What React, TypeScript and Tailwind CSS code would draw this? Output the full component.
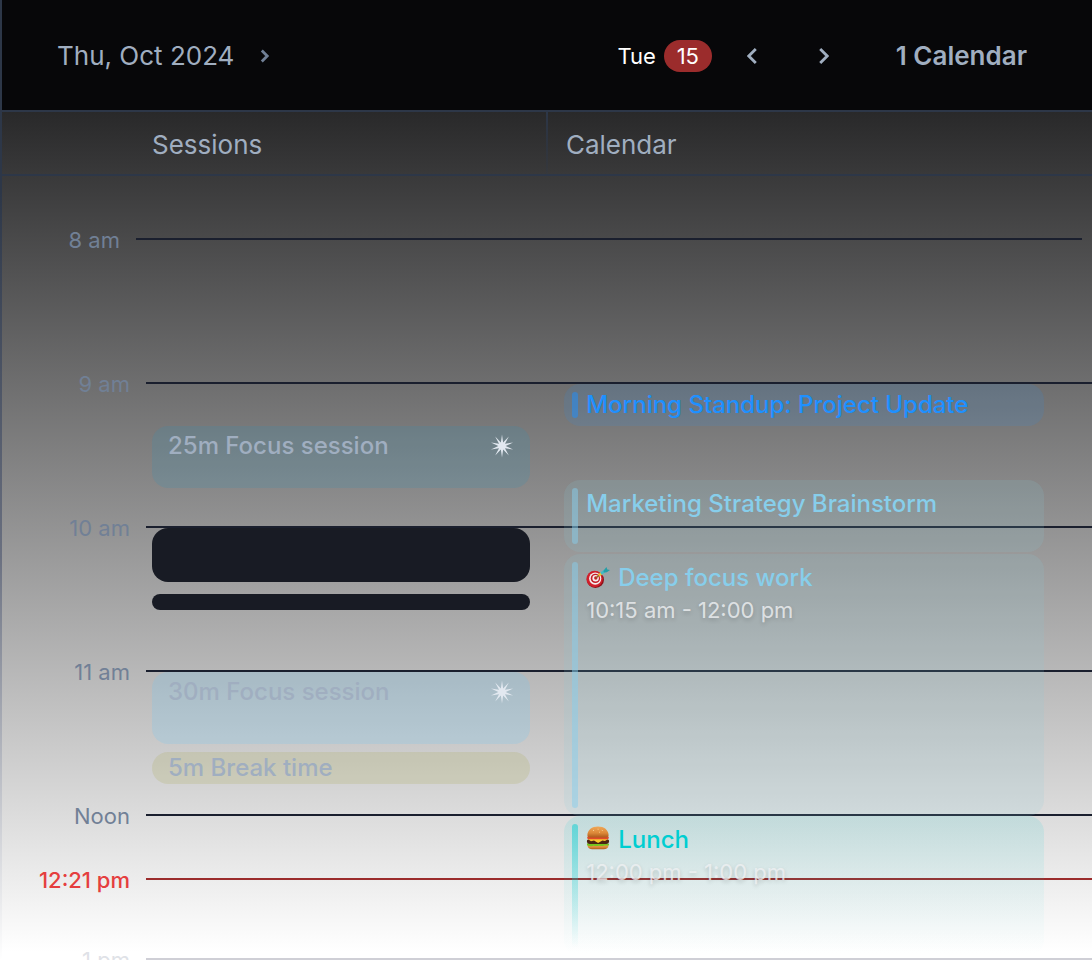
import React from "react";

type Tone = {
  box: string;
  bar: string;
  text: string;
};

const tones: Record<string, Tone> = {
  dodger: { box: "bg-[#1e90ff]/12", bar: "bg-[#1e90ff]/50", text: "text-[#1e90ff]" },
  sky: { box: "bg-[#8acfdc]/14", bar: "bg-[#87ceeb]/50", text: "text-[#87ceeb]" },
  turquoise: {
    box: "bg-linear-to-b/srgb from-[#00ced1]/12 to-[#00ced1]/0",
    bar: "bg-linear-to-b/srgb from-[#00ced1]/50 to-[#00ced1]/0",
    text: "text-[#00ced1]",
  },
};

const hours = [
  { label: "8 am", row: "pr-2.5", labelBox: "w-[118px]", color: "text-[#718096]", line: "bg-[#1a1f2e]" },
  { label: "9 am", row: "", labelBox: "w-32", color: "text-[#718096]", line: "bg-[#1a1f2e]" },
  { label: "10 am", row: "", labelBox: "w-32", color: "text-[#718096]", line: "bg-[#1a1f2e]" },
  { label: "11 am", row: "", labelBox: "w-32", color: "text-[#718096]", line: "bg-[#1a1f2e]" },
  { label: "Noon", row: "", labelBox: "w-32", color: "text-[#718096]", line: "bg-[#1a1f2e]" },
  { label: "1 pm", row: "", labelBox: "w-32", color: "text-[#dfe2e7]", line: "bg-[#cfcfd6]" },
];

function Chevron({ right, className }: { right?: boolean; className: string }) {
  return (
    <svg viewBox="0 0 10 16" className={className} fill="none" stroke="currentColor" strokeWidth="2.8" aria-hidden="true">
      <path d={right ? "M1.2 1l7 7-7 7" : "M8.8 1l-7 7 7 7"} />
    </svg>
  );
}

function SmallChevron() {
  return (
    <svg viewBox="0 0 10 14" className="h-3.5 w-2.5 text-[#718096]" fill="none" stroke="currentColor" strokeWidth="2.8" aria-hidden="true">
      <path d="M1.800 1.600L7.200 7l-5.400 5.400" />
    </svg>
  );
}

function Spark() {
  const points = Array.from({ length: 20 }, (_, i) => {
    const radius = i % 2 === 0 ? 11.6 : 3.7;
    const angle = (i * Math.PI) / 10 - Math.PI / 2;
    return `${(12 + radius * Math.cos(angle)).toFixed(2)},${(12 + radius * Math.sin(angle)).toFixed(2)}`;
  }).join(" ");
  return (
    <svg viewBox="0 0 24 24" className="mt-1 size-6 shrink-0 text-[#e2e8f0]" aria-hidden="true">
      <polygon points={points} fill="currentColor" />
    </svg>
  );
}

function Target() {
  return (
    <svg viewBox="0 0 24 24" className="size-6 shrink-0" role="img" aria-label="Target">
      <ellipse cx="9.4" cy="13.8" rx="8.600" ry="8.2" fill="#8d1219" />
      <circle cx="8.6" cy="13" r="8.2" fill="#d01f2b" />
      <circle cx="9.2" cy="12.6" r="6.1" fill="#f6eeee" />
      <circle cx="9.4" cy="12.4" r="4.7" fill="#c51d28" />
      <circle cx="9.6" cy="12.2" r="3.2" fill="#f6eeee" />
      <circle cx="9.8" cy="12" r="1.700" fill="#c51d28" />
      <path d="M10 12L14.600 7.800" stroke="#8c6a20" strokeWidth="1.200" />
      <path d="M12.800 9.600l2.800-2.400" stroke="#f2c230" strokeWidth="2.600" />
      <path d="M15 7.600l4.600-3.200" stroke="#42bcc6" strokeWidth="2.800" />
      <path d="M17.400 5L20.400 1l.9 2.400 2.700.6-3.200 2.200-3 .3z" fill="#239fa8" />
    </svg>
  );
}

function Burger() {
  return (
    <svg viewBox="0 0 24 24" className="mb-1 size-6 shrink-0" role="img" aria-label="Hamburger">
      <defs>
        <linearGradient id="bun" x1="0" y1="0" x2="0" y2="1">
          <stop offset="0" stopColor="#f0a858" />
          <stop offset="0.6" stopColor="#dc8838" />
          <stop offset="1" stopColor="#ad5a1c" />
        </linearGradient>
      </defs>
      <path d="M1.6 18.2h20.8v1.6c0 2.4-2 3.4-4.6 3.4H6.2c-2.6 0-4.6-1-4.6-3.4z" fill="url(#bun)" />
      <path d="M1 17.4c2-.8 3.6.8 5.6 0s3.4.9 5.4 0 3.6.8 5.6 0 3.4.8 5.4 0v1.8c-2 .9-3.6-.2-5.4.6s-3.6-.6-5.600.1-3.600-.6-5.400 0S3 20.100 1 19.200z" fill="#75c51e" />
      <path d="M.9 15.2c0-1.600 1-2 3-2h16.200c2 0 3 .4 3 2s-1 2.800-3 2.800H3.900c-2 0-3-1.200-3-2.800z" fill="#4c2412" />
      <path d="M1.400 12.800h21.200L19 15.100l-2.600-.5-4.300 2.400L8 14.600l-3 .6z" fill="#fcc82e" />
      <path d="M1.200 11.500c0-.8.6-1.100 1.300-1.100h19c.7 0 1.300.3 1.300 1.100s-.6 1.700-1.300 1.700h-19c-.7 0-1.300-.9-1.300-1.700z" fill="#e04a2c" />
      <path d="M1.400 9.200C1.400 3.800 6 .4 12 .4s10.600 3.400 10.600 8.800c0 1.500-1 2.200-2.600 2.200H4c-1.600 0-2.600-.7-2.600-2.200z" fill="url(#bun)" />
      <path d="M7 4.600l1-.3M11.600 3.200h1M15.800 4.200l.9.400M13 6.200h.8" stroke="#fbd79c" strokeWidth=".9" />
    </svg>
  );
}

function SessionBlock({ title, className, spark }: { title?: string; className: string; spark?: boolean }) {
  return (
    <div className={`flex items-start justify-between px-4 text-2xl font-medium text-[#a0aec0] ${className}`}>
      {title && <span className="truncate leading-8">{title}</span>}
      {spark && <Spark />}
    </div>
  );
}

type EventProps = {
  tone: Tone;
  title: string;
  time?: string;
  icon?: React.ReactNode;
  className: string;
};

function CalendarEvent({ tone, title, time, icon, className }: EventProps) {
  return (
    <article className={`flex gap-2 rounded-2xl px-2 py-2 ${tone.box} ${className}`}>
      <span className={`w-1.5 shrink-0 self-stretch rounded-full ${tone.bar}`} />
      <div className="min-w-0">
        <h3 className={`flex h-8 items-center gap-2 text-2xl leading-8 font-medium ${tone.text}`}>
          {icon}
          <span className="truncate">{title}</span>
        </h3>
        {time && (
          <p className="text-[22px] leading-8 text-[#f0f2f4]/80 text-shadow-[0_2px_4px_rgb(0_0_0/0.18)]">{time}</p>
        )}
      </div>
    </article>
  );
}

export default function App() {
  return (
    <div className="flex h-screen overflow-hidden bg-white font-[Inter,'Liberation_Sans',sans-serif]">
      <div className="w-0.5 shrink-0 bg-linear-to-b/srgb from-[#2d3748] from-20% via-[#6a7080] via-58% to-white" />
      <div className="flex min-w-0 flex-1 flex-col">
        <header className="flex h-28 shrink-0 items-center justify-between border-b-2 border-[#2d3748] bg-[#070709] pt-0.5 pl-[55px] text-[#a0aec0]">
          <button type="button" className="flex items-center gap-[26px] text-[26px] leading-8">
            Thu, Oct 2024
            <SmallChevron />
          </button>
          <div className="flex items-center">
            <div className="flex items-center gap-2 text-[22px] leading-8 text-white">
              Tue
              <span className="w-12 rounded-full bg-[#9b2c2c] text-center">15</span>
            </div>
            <div className="flex pl-1">
              <button type="button" aria-label="Previous day" className="flex h-10 w-[72px] items-center justify-center">
                <Chevron className="h-4 w-2.5" />
              </button>
              <button type="button" aria-label="Next day" className="flex h-10 w-[72px] items-center justify-center">
                <Chevron right className="h-4 w-2.5" />
              </button>
            </div>
            <button type="button" className="pr-[65px] pl-9 text-[26px] leading-8 font-semibold">
              1 Calendar
            </button>
          </div>
        </header>

        <main className="flex min-h-0 flex-1 flex-col overflow-hidden bg-linear-to-b/srgb from-[#29292a] via-[#dcdcdc] via-83% to-white to-99%">
          <div className="flex h-16 shrink-0 border-b-2 border-[#2d3748] text-[26px] text-[#a0aec0]">
            <h2 className="w-[49.9%] pt-4 pl-[150px] leading-[34px]">Sessions</h2>
            <div className="w-0.5 bg-linear-to-b/srgb from-[#2d3748] to-[#2d3748]/20" />
            <h2 className="flex-1 pt-4 pl-[18px] leading-[34px]">Calendar</h2>
          </div>

          <div className="grid min-h-0 flex-1 grid-cols-1">
            <ol className="col-start-1 row-start-1 pt-[47px]">
              {hours.map((hour) => (
                <li key={hour.label} className={`flex h-36 items-start gap-4 ${hour.row}`}>
                  <span className={`${hour.labelBox} ${hour.color} shrink-0 text-right text-[22px] leading-[34px]`}>
                    {hour.label}
                  </span>
                  <span className={`mt-[15px] h-0.5 flex-1 ${hour.line}`} />
                </li>
              ))}
            </ol>

            <div className="col-start-1 row-start-1 flex items-start gap-4 pt-[687px]">
              <span className="w-32 shrink-0 text-right text-[22px] leading-[34px] font-medium text-[#e53e3e]">
                12:21 pm
              </span>
              <span className="mt-[15px] h-0.5 flex-1 bg-[#9b2c2c]" />
            </div>

            <div className="col-start-1 row-start-1 flex pr-12 pl-[150px]">
              <section className="w-[42.4%] shrink-0 pt-[250px]">
                <SessionBlock title="25m Focus session" spark className="h-[62px] rounded-2xl bg-[#3993b6]/20 pt-1" />
                <SessionBlock className="mt-10 h-[54px] rounded-2xl bg-[#181b24]" />
                <SessionBlock className="mt-3 h-4 rounded-full bg-[#181b24]" />
                <SessionBlock title="30m Focus session" spark className="mt-[62px] h-[72px] rounded-2xl bg-[#67c8fa]/20 pt-1" />
                <SessionBlock title="5m Break time" className="mt-2 h-8 rounded-full bg-[#aaaa50]/20" />
              </section>
              <section className="ml-[34px] min-w-0 flex-1 pt-[208px]">
                <CalendarEvent
                  tone={tones.dodger}
                  title="Morning Standup: Project Update"
                  className="h-[42px] items-center"
                />
                <CalendarEvent tone={tones.sky} title="Marketing Strategy Brainstorm" className="mt-[54px] h-[72px]" />
                <CalendarEvent
                  tone={tones.sky}
                  icon={<Target />}
                  title="Deep focus work"
                  time="10:15 am - 12:00 pm"
                  className="mt-0.5 h-[262px]"
                />
                <CalendarEvent
                  tone={tones.turquoise}
                  icon={<Burger />}
                  title="Lunch"
                  time="12:00 pm - 1:00 pm"
                  className="h-[140px]"
                />
              </section>
            </div>
          </div>
        </main>
      </div>
    </div>
  );
}
